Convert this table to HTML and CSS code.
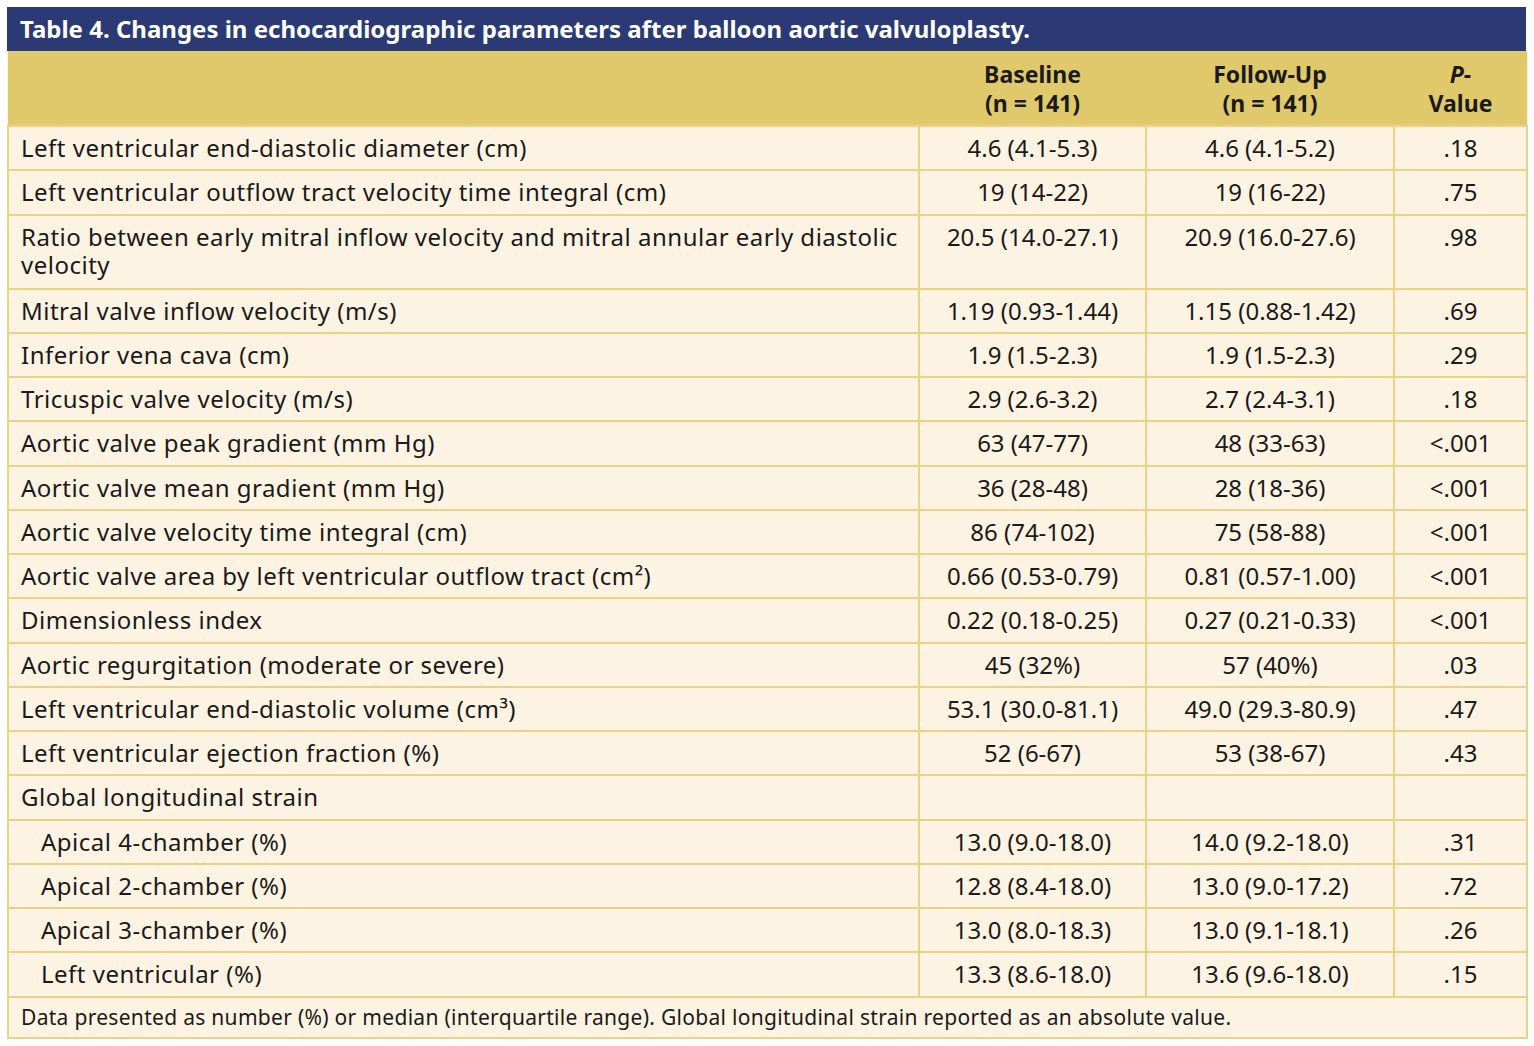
FILE: index.html
```html
<!DOCTYPE html>
<html>
<head>
<meta charset="utf-8">
<link rel="stylesheet" href="styles.css">
</head>
<body>
<div class="wrap">
<div class="title">Table 4. Changes in echocardiographic parameters after balloon aortic valvuloplasty.</div>
<table class="tbl">
<colgroup><col class="c1"><col class="c2"><col class="c3"><col class="c4"></colgroup>
<thead>
<tr><th></th><th>Baseline<br>(n = 141)</th><th>Follow-Up<br>(n = 141)</th><th><i>P</i>-<br>Value</th></tr>
</thead>
<tbody>
<tr><td>Left ventricular end-diastolic diameter (cm)</td><td>4.6 (4.1-5.3)</td><td>4.6 (4.1-5.2)</td><td>.18</td></tr>
<tr><td>Left ventricular outflow tract velocity time integral (cm)</td><td>19 (14-22)</td><td>19 (16-22)</td><td>.75</td></tr>
<tr class="two"><td>Ratio between early mitral inflow velocity and mitral annular early diastolic velocity</td><td>20.5 (14.0-27.1)</td><td>20.9 (16.0-27.6)</td><td>.98</td></tr>
<tr><td>Mitral valve inflow velocity (m/s)</td><td>1.19 (0.93-1.44)</td><td>1.15 (0.88-1.42)</td><td>.69</td></tr>
<tr><td>Inferior vena cava (cm)</td><td>1.9 (1.5-2.3)</td><td>1.9 (1.5-2.3)</td><td>.29</td></tr>
<tr><td>Tricuspic valve velocity (m/s)</td><td>2.9 (2.6-3.2)</td><td>2.7 (2.4-3.1)</td><td>.18</td></tr>
<tr><td>Aortic valve peak gradient (mm Hg)</td><td>63 (47-77)</td><td>48 (33-63)</td><td>&lt;.001</td></tr>
<tr><td>Aortic valve mean gradient (mm Hg)</td><td>36 (28-48)</td><td>28 (18-36)</td><td>&lt;.001</td></tr>
<tr><td>Aortic valve velocity time integral (cm)</td><td>86 (74-102)</td><td>75 (58-88)</td><td>&lt;.001</td></tr>
<tr><td>Aortic valve area by left ventricular outflow tract (cm²)</td><td>0.66 (0.53-0.79)</td><td>0.81 (0.57-1.00)</td><td>&lt;.001</td></tr>
<tr><td>Dimensionless index</td><td>0.22 (0.18-0.25)</td><td>0.27 (0.21-0.33)</td><td>&lt;.001</td></tr>
<tr><td>Aortic regurgitation (moderate or severe)</td><td>45 (32%)</td><td>57 (40%)</td><td>.03</td></tr>
<tr><td>Left ventricular end-diastolic volume (cm³)</td><td>53.1 (30.0-81.1)</td><td>49.0 (29.3-80.9)</td><td>.47</td></tr>
<tr><td>Left ventricular ejection fraction (%)</td><td>52 (6-67)</td><td>53 (38-67)</td><td>.43</td></tr>
<tr><td>Global longitudinal strain</td><td></td><td></td><td></td></tr>
<tr><td class="ind">Apical 4-chamber (%)</td><td>13.0 (9.0-18.0)</td><td>14.0 (9.2-18.0)</td><td>.31</td></tr>
<tr><td class="ind">Apical 2-chamber (%)</td><td>12.8 (8.4-18.0)</td><td>13.0 (9.0-17.2)</td><td>.72</td></tr>
<tr><td class="ind">Apical 3-chamber (%)</td><td>13.0 (8.0-18.3)</td><td>13.0 (9.1-18.1)</td><td>.26</td></tr>
<tr><td class="ind">Left ventricular (%)</td><td>13.3 (8.6-18.0)</td><td>13.6 (9.6-18.0)</td><td>.15</td></tr>
</tbody>
<tfoot>
<tr><td colspan="4" class="foot">Data presented as number (%) or median (interquartile range). Global longitudinal strain reported as an absolute value.</td></tr>
</tfoot>
</table>
</div>
</body>
</html>
```

FILE: styles.css
```css
html, body {
  margin: 0;
  padding: 0;
  background: #ffffff;
}
body {
  padding: 7px 8px 0 7px;
  font-family: "Noto Sans", "Open Sans", sans-serif;
  color: #1a1a1a;
}
.wrap {
  width: 1519px;
}
.title {
  background: #2b3a74;
  color: #ffffff;
  font-weight: 700;
  font-size: 24px;
  line-height: 44px;
  height: 44px;
  padding-left: 13px;
  box-sizing: border-box;
}
.tbl {
  width: 1519px;
  border-collapse: collapse;
  table-layout: fixed;
  background: #fdf3e2;
}
.c1 { width: 911px; }
.c2 { width: 227px; }
.c3 { width: 248px; }
.c4 { width: 133px; }
.tbl th {
  background: #e0c96a;
  font-weight: 700;
  font-size: 23px;
  line-height: 29px;
  height: 75px;
  padding: 9px 4px 5px 4px;
  box-sizing: border-box;
  text-align: center;
  vertical-align: top;
  border: none;
  border-bottom: 1px solid #e0c96a;
}
.tbl td {
  font-size: 24px;
  line-height: 28px;
  padding: 7px 4px 7.25px 4px;
  text-align: center;
  vertical-align: top;
  border: 2px solid #e8d283;
}
.tbl tr.two td {
  padding-bottom: 9px;
}
.tbl td:first-child {
  text-align: left;
  padding-left: 12px;
  letter-spacing: 0.5px;
}
.tbl td.ind {
  padding-left: 32px;
}
.tbl td.foot {
  font-size: 21px;
  line-height: 27px;
  letter-spacing: 0.3px;
  padding: 6px 12px 6px 12px;
  text-align: left;
}
```
